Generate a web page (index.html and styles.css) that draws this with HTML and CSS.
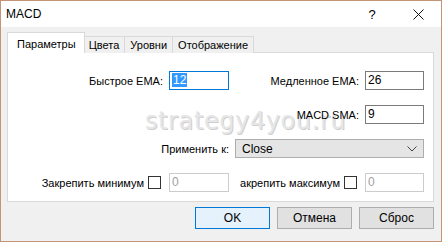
FILE: index.html
```html
<!DOCTYPE html>
<html lang="ru">
<head>
<meta charset="utf-8">
<title>MACD</title>
<link rel="stylesheet" href="styles.css">
</head>
<body>
<div class="window">
  <div class="titlebar">
    <span class="title">MACD</span>
    <span class="tb-help">?</span>
    <span class="tb-close">
      <svg width="11" height="11" viewBox="0 0 11 11"><path d="M0.5 0.5L10.5 10.5M10.5 0.5L0.5 10.5" stroke="#111" stroke-width="1" fill="none"/></svg>
    </span>
  </div>
  <div class="client">
    <div class="tabs">
      <div class="tab active">Параметры</div>
      <div class="tab">Цвета</div>
      <div class="tab">Уровни</div>
      <div class="tab">Отображение</div>
    </div>
    <div class="panel">
      <div class="watermark">strategy4you.ru</div>
      <div class="grid">
        <div class="lbl">Быстрое EMA:</div>
        <div class="edit focus"><span class="sel">12</span></div>
        <div class="lbl">Медленное EMA:</div>
        <div class="edit">26</div>

        <div class="lbl"></div>
        <div></div>
        <div class="lbl">MACD SMA:</div>
        <div class="edit">9</div>

        <div class="lbl span2">Применить к:</div>
        <div class="combo span2">
          <span>Close</span>
          <svg width="10" height="6" viewBox="0 0 10 6"><path d="M0.5 0.5L5 5L9.5 0.5" stroke="#444" stroke-width="1" fill="none"/></svg>
        </div>

        <div class="lbl chk-lbl">Закрепить минимум <span class="box"></span></div>
        <div class="edit disabled">0</div>
        <div class="lbl chk-lbl">акрепить максимум <span class="box"></span></div>
        <div class="edit disabled">0</div>
      </div>
    </div>
    <div class="buttons">
      <div class="btn default">OK</div>
      <div class="btn">Отмена</div>
      <div class="btn">Сброс</div>
    </div>
  </div>
</div>
</body>
</html>
```

FILE: styles.css
```css
html, body {
  margin: 0;
  padding: 0;
  background: #f0f0f0;
}
body {
  font-family: "Liberation Sans", Arial, sans-serif;
  font-size: 11px;
  color: #000;
}
.window {
  width: 442px;
  height: 242px;
  box-sizing: border-box;
  border: 1px solid #c39478;
  display: flex;
  flex-direction: column;
  background: #f0f0f0;
}
.titlebar {
  height: 26px;
  background: #fff;
  display: flex;
  align-items: center;
  flex: none;
}
.title {
  padding-left: 5px;
  font-size: 12px;
  flex: 1;
}
.tb-help {
  font-size: 13px;
  width: 46px;
  text-align: center;
}
.tb-close {
  width: 46px;
  display: flex;
  justify-content: center;
  align-items: center;
}
.client {
  flex: 1;
  padding: 6px 7px 0 6px;
  display: flex;
  flex-direction: column;
}
.tabs {
  display: flex;
  align-items: flex-end;
  height: 20px;
  position: relative;
  z-index: 1;
  margin-bottom: -1px;
}
.tab {
  border: 1px solid #d9d9d9;
  border-bottom: none;
  height: 17px;
  line-height: 16px;
  padding: 0 5px;
  box-sizing: border-box;
  margin-left: -1px;
  background: #f0f0f0;
}
.tab.active {
  height: 21px;
  line-height: 22px;
  background: #fff;
  padding: 0 8px 0 9px;
  margin-left: 0;
  margin-right: -1px;
  position: relative;
  z-index: 2;
}
.panel {
  height: 150px;
  box-sizing: border-box;
  background: #fff;
  border: 1px solid #d9d9d9;
  position: relative;
}
.grid {
  position: relative;
  display: grid;
  grid-template-columns: 155px 60px 124px 59px;
  column-gap: 6px;
  grid-template-rows: 19px 19px 19px 19px;
  row-gap: 15px;
  padding-top: 18px;
}
.lbl {
  display: flex;
  align-items: center;
  justify-content: flex-end;
  white-space: nowrap;
}
.span2 {
  grid-column: span 2;
}
.edit {
  border: 1px solid #7a7a7a;
  box-sizing: border-box;
  height: 19px;
  line-height: 17px;
  padding-left: 2px;
  background: #fff;
  font-size: 12px;
}
.edit.focus {
  border-color: #0078d7;
}
.sel {
  background: #3399ff;
  color: #fff;
  padding: 0 1px;
}
.edit.disabled {
  border-color: #cccccc;
  color: #a0a0a0;
}
.combo {
  border: 1px solid #adadad;
  background: #e5e5e5;
  box-sizing: border-box;
  height: 19px;
  display: flex;
  align-items: center;
  justify-content: space-between;
  padding: 0 6px;
  font-size: 12px;
}
.chk-lbl {
  gap: 4px;
  padding-right: 2px;
}
.box {
  display: inline-block;
  width: 13px;
  height: 13px;
  box-sizing: border-box;
  border: 1px solid #333;
  background: #fff;
}
.watermark {
  position: absolute;
  left: 137px;
  top: 54px;
  font-family: "DejaVu Sans", sans-serif;
  font-size: 24px;
  color: #e6e6e6;
  letter-spacing: 0.6px;
  text-shadow: 1px 1px 0 #cfcfcf, -1px -1px 0 #fff;
  pointer-events: none;
}
.buttons {
  display: flex;
  justify-content: flex-end;
  gap: 7px;
  padding-top: 5px;
}
.btn {
  width: 75px;
  height: 22px;
  box-sizing: border-box;
  border: 1px solid #adadad;
  background: #e1e1e1;
  display: flex;
  align-items: center;
  justify-content: center;
  font-size: 12px;
}
.btn.default {
  border-color: #0078d7;
  background: #e5f1fb;
}
```
